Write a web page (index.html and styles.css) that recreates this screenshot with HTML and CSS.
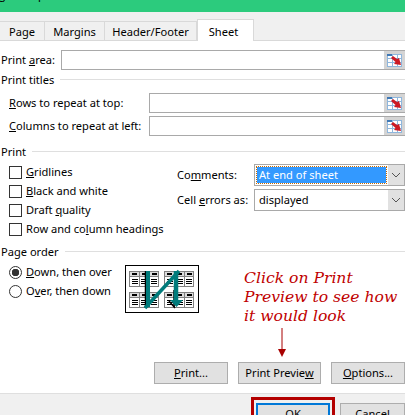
FILE: index.html
```html
<!DOCTYPE html>
<html lang="en">
<head>
<meta charset="utf-8">
<title>Page Setup</title>
<link rel="stylesheet" href="styles.css">
</head>
<body>
<svg class="sprites" width="0" height="0" aria-hidden="true">
  <symbol id="ref" viewBox="0 0 21 18">
    <rect width="21" height="18" fill="#d4d4d4"/>
    <rect x="3" y="3" width="15" height="13" fill="#fff"/>
    <path d="M3 3.500h15M3 7.500h15M3 11.500h15M3 15.500h15M3.500 3v13M8.500 3v13M13.500 3v13M17.500 3v13" stroke="#8fb6dc" fill="none"/>
    <path d="M3 3h5v2H3z" fill="#3f78b5"/>
    <path d="M7 7l2-2 4 3 2-1 2 7-7-1 1.500-2z" fill="#cc1a24"/>
  </symbol>
  <symbol id="chev" viewBox="0 0 16 20">
    <path d="M4 8l4 4 4-4" fill="none" stroke="#555" stroke-width="1"/>
  </symbol>
  <symbol id="sheet" viewBox="0 0 30 16">
    <rect x=".5" y=".5" width="29" height="15" fill="#fff" stroke="#808080"/>
    <path d="M1 1h28v4H1z" fill="#dcdcdc"/>
    <path d="M1 5.500h28M10.500 1v14M20.500 1v14" stroke="#808080" fill="none"/>
    <path d="M3 2h5v2H3zM13 2h5v2h-5zM23 2h5v2h-5zM3 8h6v1H3zM3 10h6v1H3zM3 12h6v1H3zM12 8h7v1h-7zM12 10h7v1h-7zM12 12h7v1h-7zM22 8h6v1h-6zM22 10h6v1h-6zM22 12h6v1h-6z" fill="#000"/>
  </symbol>
</svg>
<div class="dialog">
  <div class="titlebar"><span class="title">Page Setup</span></div>
  <div class="tabs">
    <div class="tab t-page">Page</div>
    <div class="tab t-margins">Margins</div>
    <div class="tab t-header">Header/Footer</div>
    <div class="tab active">Sheet</div>
  </div>
  <div class="panel">
    <div class="row area">
      <span class="lab-area">Print <u>a</u>rea:</span>
      <div class="field"><svg class="ref"><use href="#ref"/></svg></div>
    </div>
    <div class="group g-titles"><span>Print titles</span><i></i></div>
    <div class="row r1">
      <span class="lab-ind"><u>R</u>ows to repeat at top:</span>
      <div class="field"><svg class="ref"><use href="#ref"/></svg></div>
    </div>
    <div class="row r2">
      <span class="lab-ind"><u>C</u>olumns to repeat at left:</span>
      <div class="field"><svg class="ref"><use href="#ref"/></svg></div>
    </div>
    <div class="group g-print"><span>Print</span><i></i></div>
    <div class="print-grid">
      <div class="checks">
        <div class="opt"><b class="box"></b><span><u>G</u>ridlines</span></div>
        <div class="opt"><b class="box"></b><span><u>B</u>lack and white</span></div>
        <div class="opt"><b class="box"></b><span>Draft <u>q</u>uality</span></div>
        <div class="opt"><b class="box"></b><span>Row and co<u>l</u>umn headings</span></div>
      </div>
      <div class="combos">
        <div class="combo-row">
          <span class="combo-lab">Co<u>m</u>ments:</span>
          <div class="combo"><div class="value selected"><span>At end of sheet</span></div><div class="drop"><svg class="chev"><use href="#chev"/></svg></div></div>
        </div>
        <div class="combo-row">
          <span class="combo-lab">Cell <u>e</u>rrors as:</span>
          <div class="combo"><div class="value"><span>displayed</span></div><div class="drop"><svg class="chev"><use href="#chev"/></svg></div></div>
        </div>
      </div>
    </div>
    <div class="group g-order"><span>Page order</span><i></i></div>
    <div class="order">
      <div class="radios">
        <div class="opt"><b class="radio on"></b><span><u>D</u>own, then over</span></div>
        <div class="opt"><b class="radio"></b><span>O<u>v</u>er, then down</span></div>
      </div>
      <svg class="diagram" viewBox="0 0 74 48">
        <rect x=".5" y=".5" width="73" height="47" fill="#fff" stroke="#000"/>
        <use href="#sheet" x="4" y="6" width="30" height="16"/>
        <use href="#sheet" x="39" y="6" width="30" height="16"/>
        <use href="#sheet" x="4" y="27" width="30" height="16"/>
        <use href="#sheet" x="39" y="27" width="30" height="16"/>
        <path d="M20.500 43V6" stroke="#000" stroke-width="1.500"/>
        <path d="M23 6v36" stroke="#007b7b" stroke-width="4"/>
        <path d="M20 43L54 6" stroke="#007b7b" stroke-width="3.500"/>
        <path d="M49 25v17" stroke="#000" stroke-width="1.500"/>
        <path d="M51 6v33" stroke="#007b7b" stroke-width="4.500"/>
        <path d="M45 35h13l-6.500 7z" fill="#007b7b"/>
        <path d="M44 36l6 7" stroke="#000" stroke-width="1.500"/>
      </svg>
    </div>
    <div class="note">Click on Print Preview to see how it would look</div>
    <svg class="note-arrow" viewBox="0 0 10 30"><path d="M5 0v22" stroke="#a80000"/><path d="M1 21h8l-4 8z" fill="#a80000"/></svg>
    <div class="actions">
      <div class="btn b-print"><span><u>P</u>rint...</span></div>
      <div class="btn b-preview"><span>Print Previe<u>w</u></span></div>
      <div class="btn b-options"><span><u>O</u>ptions...</span></div>
    </div>
  </div>
  <div class="footer">
    <div class="ok-mark"><div class="btn ok"><span>OK</span></div></div>
    <div class="btn cancel"><span>Cancel</span></div>
  </div>
</div>
</body>
</html>
```
FILE: styles.css
```css
html,body{margin:0;padding:0;background:#fff}
.sprites{position:absolute}
.dialog{width:405px;height:415px;overflow:hidden;font-family:"Noto Sans","Open Sans",sans-serif;font-size:11.1px;line-height:16px;color:#000;display:flex;flex-direction:column;position:relative}
u{text-underline-offset:1px}
.titlebar{height:12px;flex:none;background:#2ccb7d;overflow:hidden}
.title{display:block;margin:-13px 0 0 -14px;white-space:nowrap}
.tabs{height:29px;flex:none;background:#f0f0f0;border-bottom:1px solid #d9d9d9;box-sizing:border-box;display:flex;align-items:flex-end}
.tab{height:19px;box-sizing:border-box;border:1px solid #d9d9d9;border-bottom:0;border-left:0;line-height:19px;text-align:center;flex:none}
.t-page{width:45px}
.t-margins{width:60px}
.t-header{width:92px}
.tab.active{width:57px;height:22px;background:#fff;line-height:23px;padding-right:4px;margin-bottom:-1px;border-left:1px solid #d9d9d9}
.panel{flex:1;min-height:0;position:relative;display:flex;flex-direction:column}
.row{display:flex;align-items:center}
.field{flex:1;height:20px;box-sizing:border-box;border:1px solid #a9a9a9;border-right:0;display:flex;justify-content:flex-end;background:#fff}
.ref{width:21px;height:18px;display:block}
.area{margin-top:9px}
.lab-area{width:61px;flex:none;padding-left:1px;box-sizing:border-box}
.lab-ind{width:149px;flex:none;padding-left:9px;box-sizing:border-box}
.group{display:flex;align-items:center;gap:6px;height:16px;padding-left:1px}
.group i{flex:1;height:1px;background:#dfdfdf;margin-top:-2px}
.g-titles{margin-top:2px}
.r1{margin-top:5px}
.r2{margin-top:3px}
.g-print{margin-top:8px}
.print-grid{display:flex;margin-top:4px}
.checks{width:177px;flex:none;display:flex;flex-direction:column;gap:3px;padding-left:9px;box-sizing:border-box}
.opt{display:flex;align-items:center;gap:4px;height:16px;white-space:nowrap}
.box{display:block;width:13px;height:13px;box-sizing:border-box;border:1px solid #333;background:#fff;flex:none}
.combos{flex:1;display:flex;flex-direction:column;gap:3px}
.combo-row{display:flex;align-items:center}
.combo-lab{width:77px;flex:none}
.combo{flex:1;height:22px;box-sizing:border-box;border:1px solid #a9a9a9;display:flex;background:#fff}
.value{flex:1;margin:2px;box-sizing:border-box;padding-left:2px;line-height:15px}
.value span{display:block}
.selected{background:#3399ff;color:#fff;outline:1px dotted #c86a00;outline-offset:0}
.drop{width:16px;background:#e1e1e1;flex:none}
.chev{width:16px;height:20px;display:block}
.g-order{margin-top:7px}
.order{display:flex;margin-top:5px}
.radios{width:125px;flex:none;margin-top:-1px;padding-left:9px;box-sizing:border-box;display:flex;flex-direction:column;gap:3px}
.radio{display:block;width:13px;height:13px;box-sizing:border-box;border:1px solid #333;border-radius:50%;background:#fff;flex:none}
.radio.on{background:radial-gradient(circle,#333 0 3.500px,#fff 4px)}
.diagram{width:74px;height:48px;display:block;flex:none}
.note{position:absolute;left:244px;top:228px;width:160px;font-family:"DejaVu Serif",serif;font-style:italic;font-size:15.600px;line-height:19px;color:#c00000}
.note-arrow{position:absolute;left:277px;top:287px;width:10px;height:30px}
.actions{display:flex;justify-content:flex-end;gap:10px;margin-top:49px}
.btn{height:22px;box-sizing:border-box;background:#e1e1e1;border:1px solid #adadad;display:flex;align-items:center;justify-content:center;flex:none}
.b-print,.b-options{width:74px}
.b-preview{width:83px}
.footer{height:22px;box-sizing:border-box;flex:none;background:#f0f0f0;border-top:1px solid #dfdfdf;display:flex;gap:5px;justify-content:flex-end;padding-top:3px}
.ok-mark{width:84px;height:24px;box-sizing:border-box;border:3px solid #b40000;padding:3px 2px;flex:none;background:#f0f0f0}
.ok{width:74px;height:22px;border:2px solid #0078d7}
.cancel{width:65px;height:22px;margin-top:6px}
```
